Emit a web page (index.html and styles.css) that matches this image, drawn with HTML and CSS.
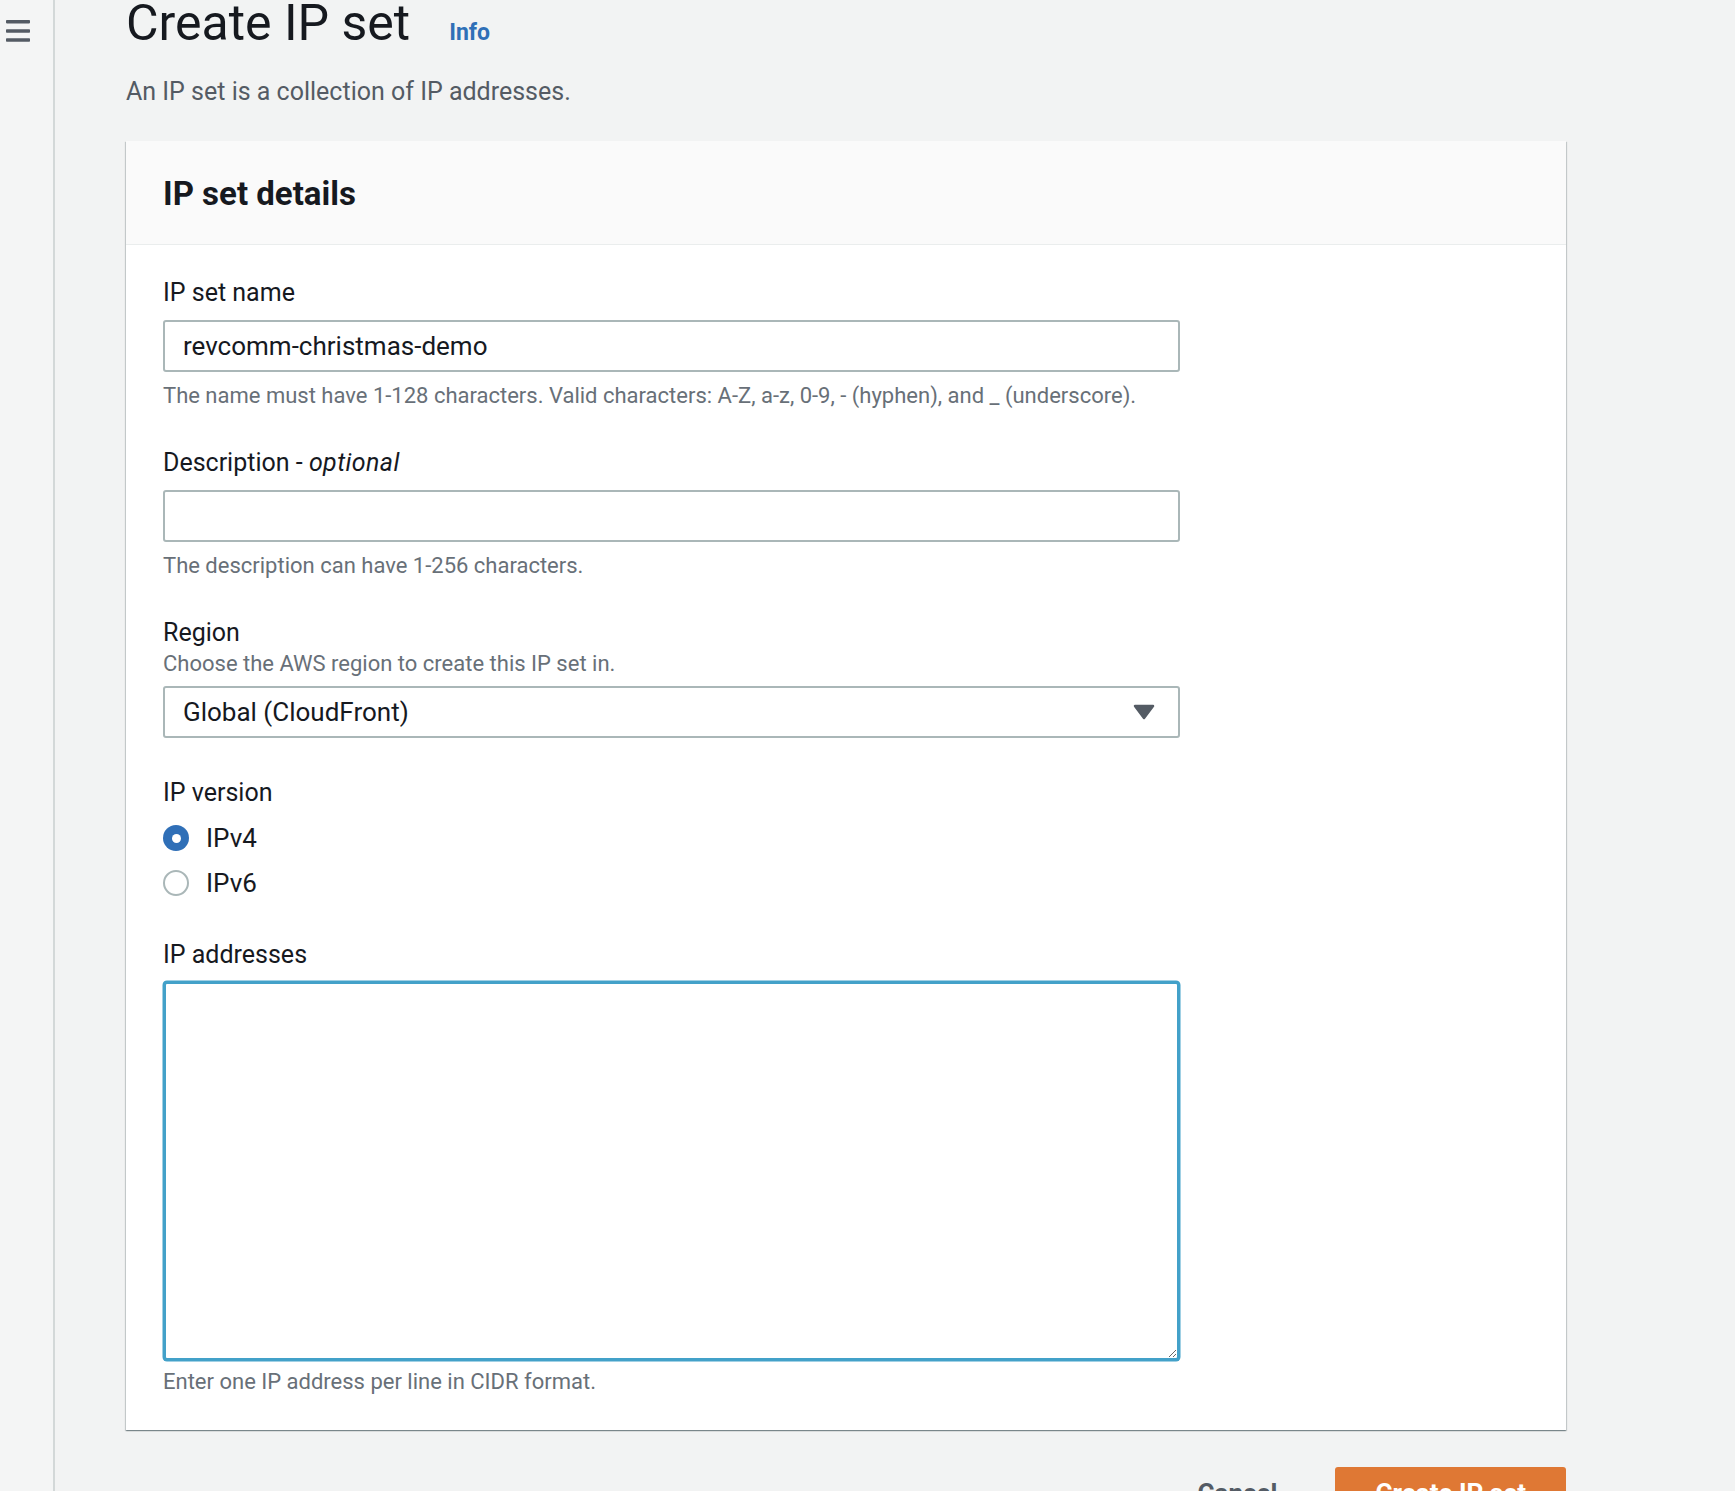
FILE: index.html
```html
<!DOCTYPE html>
<html lang="en">
<head>
<meta charset="utf-8">
<title>Create IP set</title>
<link rel="stylesheet" href="styles.css">
</head>
<body>
<div class="layout">
  <nav class="sidebar">
    <button class="menu-btn" aria-label="Open navigation">
      <svg width="24" height="22" viewBox="0 0 24 22" aria-hidden="true">
        <rect x="0" y="0" width="24" height="3.4" rx="0.8"/>
        <rect x="0" y="9.3" width="24" height="3.4" rx="0.8"/>
        <rect x="0" y="18.3" width="24" height="3.4" rx="0.8"/>
      </svg>
    </button>
  </nav>
  <main class="main">
    <div class="content">
      <header class="page-header">
        <h1 class="page-title">Create IP set</h1>
        <a class="info-link" href="#">Info</a>
      </header>
      <p class="page-desc">An IP set is a collection of IP addresses.</p>

      <section class="card">
        <div class="card-header">
          <h2 class="card-title">IP set details</h2>
        </div>
        <div class="card-body">
          <div class="field">
            <label class="field-label" for="name">IP set name</label>
            <input class="input" id="name" type="text" value="revcomm-christmas-demo">
            <p class="hint">The name must have 1-128 characters. Valid characters: A-Z, a-z, 0-9, - (hyphen), and _ (underscore).</p>
          </div>

          <div class="field">
            <label class="field-label" for="desc">Description - <i>optional</i></label>
            <input class="input" id="desc" type="text" value="">
            <p class="hint">The description can have 1-256 characters.</p>
          </div>

          <div class="field field-select">
            <label class="field-label">Region</label>
            <p class="hint hint-top">Choose the AWS region to create this IP set in.</p>
            <div class="select">
              <span>Global (CloudFront)</span>
              <svg class="caret" width="22" height="16" viewBox="0 0 22 16" aria-hidden="true">
                <polygon points="2,2 20,2 11,14"/>
              </svg>
            </div>
          </div>

          <div class="field">
            <span class="field-label">IP version</span>
            <div class="radio-group">
              <label class="radio-row"><span class="radio radio-checked"></span><span>IPv4</span></label>
              <label class="radio-row"><span class="radio"></span><span>IPv6</span></label>
            </div>
          </div>

          <div class="field">
            <label class="field-label" for="ips">IP addresses</label>
            <textarea class="textarea" id="ips"></textarea>
            <p class="hint hint-area">Enter one IP address per line in CIDR format.</p>
          </div>
        </div>
      </section>

      <div class="actions">
        <button class="btn btn-link">Cancel</button>
        <button class="btn btn-primary">Create IP set</button>
      </div>
    </div>
  </main>
</div>
</body>
</html>
```

FILE: styles.css
```css
* { box-sizing: border-box; }

html, body {
  margin: 0;
  padding: 0;
}

body {
  background: #f2f3f3;
  font-family: Roboto, "Open Sans", "Liberation Sans", sans-serif;
  color: #16191f;
}

.layout {
  display: flex;
  min-height: 1600px;
}

.sidebar {
  width: 55px;
  flex: 0 0 55px;
  background: #f4f5f5;
  border-right: 2px solid #d3d8d8;
  padding: 20px 0 0 6px;
}

.menu-btn {
  display: block;
  border: 0;
  padding: 0;
  background: transparent;
  line-height: 0;
  cursor: pointer;
}

.menu-btn svg { fill: #545b64; }

.main {
  flex: 1;
  padding-left: 71px;
}

.content {
  width: 1440px;
}

.page-header {
  display: flex;
  align-items: baseline;
  gap: 39px;
}

.page-title {
  margin: 0;
  font-size: 50px;
  line-height: 46px;
  font-weight: 400;
  color: #16191f;
}

.info-link {
  font-size: 23px;
  font-weight: 700;
  color: #2f6fb7;
  text-decoration: none;
}

.page-desc {
  margin: 30px 0 0;
  font-size: 25px;
  line-height: 32px;
  color: #545b64;
}

.card {
  margin-top: 33px;
  background: #fff;
  box-shadow: 0 1px 1px 0 rgba(0, 28, 36, 0.3), 1px 1px 1px 0 rgba(0, 28, 36, 0.15), -1px 1px 1px 0 rgba(0, 28, 36, 0.15);
}

.card-header {
  background: #fafafa;
  border-bottom: 1px solid #eaeded;
  padding: 33px 37px 30px;
}

.card-title {
  margin: 0;
  font-size: 33px;
  line-height: 40px;
  font-weight: 700;
  color: #16191f;
}

.card-body {
  padding: 32px 37px 33px;
}

.field + .field { margin-top: 36px; }

.field-select { padding-bottom: 3px; }

.field-label {
  display: block;
  font-size: 25px;
  line-height: 32px;
  color: #16191f;
}

.field-label i { font-style: italic; letter-spacing: 0.4px; }

.input {
  display: block;
  width: 1017px;
  height: 52px;
  margin-top: 11px;
  padding: 9px 18px;
  border: 2px solid #aab7b8;
  border-radius: 3px;
  background: #fff;
  font-family: inherit;
  font-size: 26px;
  line-height: 30px;
  color: #16191f;
  outline: none;
}

.hint {
  margin: 9px 0 0;
  font-size: 22px;
  line-height: 30px;
  color: #687078;
}

.hint-top { margin-top: 0; }

.select {
  display: flex;
  align-items: center;
  justify-content: space-between;
  width: 1017px;
  height: 52px;
  margin-top: 7px;
  padding: 0 23px 0 18px;
  border: 2px solid #aab7b8;
  border-radius: 3px;
  background: #fff;
  font-size: 26px;
  line-height: 30px;
  color: #16191f;
}

.caret {
  fill: #545b64;
  stroke: #545b64;
  stroke-width: 2.5;
  stroke-linejoin: round;
}

.radio-group {
  margin-top: 9px;
  display: flex;
  flex-direction: column;
  gap: 4.5px;
}

.radio-row {
  display: flex;
  align-items: center;
  gap: 17px;
  height: 40px;
  font-size: 26px;
  line-height: 40px;
  color: #16191f;
}

.radio {
  position: relative;
  flex: 0 0 26px;
  width: 26px;
  height: 26px;
  border-radius: 50%;
  border: 2px solid #aab7b8;
  background: #fff;
}

.radio-checked {
  border: 0;
  background: #2f6fb7;
}

.radio-checked::after {
  content: "";
  position: absolute;
  left: 8.5px;
  top: 8.5px;
  width: 9px;
  height: 9px;
  border-radius: 50%;
  background: #fff;
}

.textarea {
  display: block;
  width: 1017px;
  height: 380px;
  margin-top: 10px;
  padding: 9px 18px;
  border: 3px solid #43a1c9;
  border-radius: 4px;
  box-shadow: 0 0 0 0.5px #43a1c9;
  background: #fff;
  font-family: inherit;
  font-size: 26px;
  line-height: 30px;
  color: #16191f;
  outline: none;
}

.hint-area { margin-top: 6px; }

.actions {
  display: flex;
  justify-content: flex-end;
  align-items: flex-start;
  gap: 38px;
  margin-top: 37px;
}

.btn {
  font-family: inherit;
  font-size: 26px;
  font-weight: 700;
  line-height: 32px;
  border-radius: 3px;
  cursor: pointer;
}

.btn-link {
  border: 0;
  background: transparent;
  color: #545b64;
  padding: 10px 20px;
}

.btn-primary {
  border: 0;
  background: #df7834;
  color: #fff;
  padding: 10px 40px;
}
```
